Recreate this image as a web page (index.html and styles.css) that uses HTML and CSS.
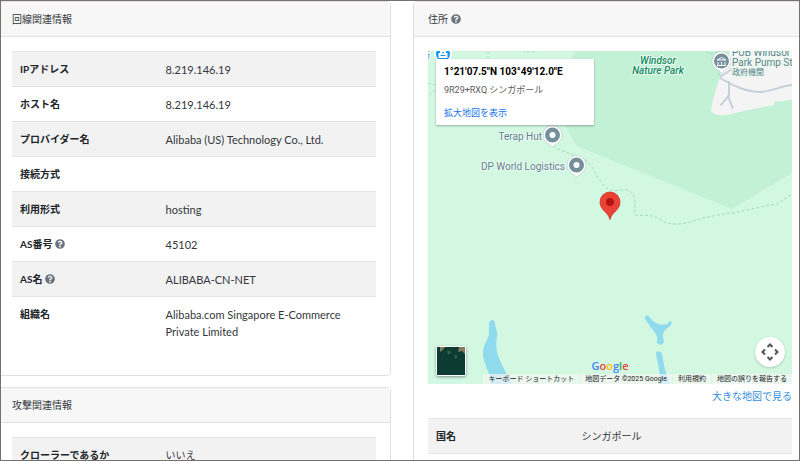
FILE: index.html
```html
<!DOCTYPE html>
<html lang="ja">
<head>
<meta charset="utf-8">
<title>IPアドレス情報</title>
<link rel="stylesheet" href="styles.css">
</head>
<body>
<svg class="defs" aria-hidden="true">
  <symbol id="help" viewBox="0 0 512 512"><path fill-rule="evenodd" d="M504 256a248 248 0 1 1-496 0 248 248 0 0 1 496 0zM262.700 90c-54.500 0-89.300 23-116.500 63.800-3.500 5.300-2.400 12.400 2.700 16.300l34.700 26.300c5.200 3.900 12.600 3 16.700-2.100 17.900-22.700 30.100-35.800 57.300-35.800 20.400 0 45.700 13.100 45.700 33 0 15-12.400 22.700-32.500 34C247.100 238.500 216 254.900 216 296v4c0 6.600 5.400 12 12 12h56c6.600 0 12-5.400 12-12v-1.300c0-28.500 83.200-29.600 83.200-106.700 0-58-60.200-102-116.500-102zM256 338a46 46 0 1 0 0 92 46 46 0 0 0 0-92z"/></symbol>
</svg>
<main class="page">
  <div class="column">
    <section class="card">
      <h2 class="card-header">回線関連情報</h2>
      <div class="card-body">
        <table class="info">
          <tr><th scope="row">IPアドレス</th><td>8.219.146.19</td></tr>
          <tr><th scope="row">ホスト名</th><td>8.219.146.19</td></tr>
          <tr><th scope="row">プロバイダー名</th><td>Alibaba (US) Technology Co., Ltd.</td></tr>
          <tr><th scope="row">接続方式</th><td></td></tr>
          <tr><th scope="row">利用形式</th><td>hosting</td></tr>
          <tr><th scope="row">AS番号 <svg class="help"><use href="#help"/></svg></th><td>45102</td></tr>
          <tr><th scope="row">AS名 <svg class="help"><use href="#help"/></svg></th><td>ALIBABA-CN-NET</td></tr>
          <tr><th scope="row">組織名</th><td>Alibaba.com Singapore E-Commerce Private Limited</td></tr>
        </table>
      </div>
    </section>
    <section class="card">
      <h2 class="card-header">攻撃関連情報</h2>
      <div class="card-body">
        <table class="info">
          <tr><th scope="row">クローラーであるか</th><td class="ja">いいえ</td></tr>
        </table>
      </div>
    </section>
  </div>
  <div class="column">
    <section class="card">
      <h2 class="card-header">住所 <svg class="help"><use href="#help"/></svg></h2>
      <div class="card-body">
        <div class="map">
          <svg class="map-canvas" viewBox="428 51 364 333" preserveAspectRatio="xMidYMid slice">
            <defs>
              <g id="pin"><path class="pin-edge" d="M0 11C-3 8-9.500 6-9.500-1a9.500 9.500 0 0 1 19 0c0 7-6.500 9-9.500 12z"/><circle class="pin-fill" cy="-1" r="7.500"/></g>
            </defs>
            <path class="land" d="M428 51h364v333H428z"/>
            <path class="park" d="M575 51l-5 11-17 38 12 26 12 20 155 63 60-36V51z"/>
            <path class="town" d="M730 51l-10 26c-4 12-8 25-9 33 0 4 8 6 16 5l21-5 26-5v-3l18-2V51z"/>
            <path class="road" d="M720 78c14 8 26 14 41 14 12-1 20-6 31-7M729 81v14l-7 9-2 1M728 96l5 13M720 77l12-8"/>
            <path class="trail" d="M553 146c7 6 15 5 23 11 15 0 17 15 25 25 9 13 17 7 24 8 13 1 9 16 10 25 13 1 20-1 27 6 13 5 19 3 28 1 20-6 31-8 43-9 19-4 31-7 44-9l15-10M706 51c2 4 8 3 12 1l-3 10 5 15"/>
            <path class="trail" d="M488 51v8M522 51q8 2 16 0M428 83l7 2M429 95l6-5"/>
            <path class="water" d="M489 323c1-4 6-4 6 0 0 5 3 9 2 14-2 10 0 18 5 28l10 19h-22c2-9-7-20-7-31 0-9 6-14 6-20z"/>
            <path class="water" d="M645 319c0-5 4-4 6 0 5 5 10 7 16 5l3-3c2 0 2 3 0 5-4 3-8 6-7 11l1 5-3 3-4-2c0-4 1-7-2-10zM656 354c0-4 5-3 6 0l3 16 5 14h-11c2-9-1-21-3-30z"/>
            <use href="#pin" x="552.500" y="136"/><circle class="pin-dot" cx="552.500" cy="135" r="3"/>
            <use href="#pin" x="576.500" y="166"/><circle class="pin-dot" cx="576.500" cy="165" r="3"/>
            <use href="#pin" x="721.500" y="62"/>
            <path class="pin-line" d="M717 60l4.500-2.500 4.500 2.500zM718 62v3M721.500 62v3M725 62v3M717 65.500h9"/>
            <circle class="shop" cx="443" cy="54" r="8"/>
            <path class="shop-line" d="M439.500 57v-3h7v3zM441 54v-3h4v3"/>
            <text class="place end" x="542" y="140">Terap Hut</text>
            <text class="place end" x="565" y="170">DP World Logistics</text>
            <text class="place" x="732" y="56">PUB Windsor</text>
            <text class="place" x="732" y="66">Park Pump Station</text>
            <text class="place-ja" x="732" y="75">政府機関</text>
            <text class="place-ja shop-name" x="422" y="58">所</text>
            <text class="park-name" x="658" y="64">Windsor</text>
            <text class="park-name" x="658" y="74">Nature Park</text>
            <path class="marker" d="M610 219.500c-2-8-10-9-10-17.500a10 10 0 0 1 20 0c0 8.500-8 9.500-10 17.500z"/>
            <circle class="marker-dot" cx="610" cy="202" r="4"/>
          </svg>
          <div class="place-card">
            <strong>1°21'07.5"N 103°49'12.0"E</strong>
            <span>9R29+RXQ シンガポール</span>
            <a href="#">拡大地図を表示</a>
          </div>
          <button class="satellite" type="button" aria-label="航空写真"><svg viewBox="0 0 28 28"><path fill="#0b3b32" d="M0 0h28v28H0z"/><path fill="#82795f" d="M3 0h5l-2 3-3 2zM22 0h6v7l-3-3-4 1z"/><path fill="#2c6349" d="M10 3l5 2-4 3zM17 7l4 3-3 2z"/></svg></button>
          <div class="logo" aria-label="Google"><span class="b">G</span><span class="r">o</span><span class="y">o</span><span class="b">g</span><span class="g">l</span><span class="r">e</span></div>
          <button class="pan" type="button" aria-label="カメラ コントロール"><svg viewBox="0 0 18 18"><path d="M6.500 4L9 1.500 11.500 4M6.500 14L9 16.500 11.500 14M4 6.500L1.500 9 4 11.500M14 6.500L16.500 9 14 11.500"/></svg></button>
          <div class="credits"><button type="button">キーボード ショートカット</button><span>地図データ ©2025 Google</span><a href="#">利用規約</a><a href="#">地図の誤りを報告する</a></div>
        </div>
        <p class="map-link"><a href="#">大きな地図で見る</a></p>
        <table class="info">
          <tr><th scope="row">国名</th><td class="ja">シンガポール</td></tr>
          <tr><th scope="row"></th><td></td></tr>
        </table>
      </div>
    </section>
  </div>
</main>
</body>
</html>
```
FILE: styles.css
```css
* { box-sizing: border-box; }
body {
  margin: 0;
  background: #fff;
  color: #32373c;
  font: 10px/17px Lato, "Noto Sans CJK JP", sans-serif;
}
.defs { display: block; width: 0; height: 0; }
.page {
  display: grid;
  grid-template-columns: minmax(0, 1fr) minmax(0, 1fr);
  gap: 22px;
  height: 100vh;
  overflow: hidden;
  border: 1px solid #77716c;
  padding: 0;
}
.column:first-child { margin-left: -4px; margin-right: -2px; }
.column:last-child { margin-left: 2px; margin-right: -8px; }
.card {
  margin-bottom: 11px;
  border: 1px solid #dfdfdf;
  border-radius: 4px;
  background: #fff;
}
.card-header {
  margin: 0;
  padding: 9px 14px 8px;
  border-bottom: 1px solid #dfdfdf;
  background: #f7f7f7;
  font-size: 10px;
  font-weight: 400;
}
.card-body { padding: 14px; }
.help {
  width: 10px;
  height: 10px;
  vertical-align: -1px;
  fill: #6c757d;
}
.info {
  width: 100%;
  margin-bottom: 13px;
  border-collapse: separate;
  border-spacing: 0;
  table-layout: fixed;
}
.info th, .info td {
  height: 35px;
  padding: 9px 8px 8px;
  border-top: 1px solid #e2e5e8;
  text-align: left;
  vertical-align: top;
}
.info th { width: 40%; color: #212529; font-weight: 700; }
.info td { font-size: 11px; }
.info td.ja { font-size: 10px; }
.info tr:nth-child(odd) { background: #f2f2f2; }
a { color: #3490dc; text-decoration: none; }
button { border: 0; padding: 0; font: inherit; color: inherit; }

.map {
  position: relative;
  height: 333px;
  overflow: hidden;
  font-family: Roboto, "Noto Sans CJK JP", sans-serif;
}
.map-canvas { display: block; width: 100%; height: 100%; }
.land { fill: #d3f8e2; }
.park { fill: #c3f1d5; }
.town { fill: #f5f4f5; }
.water { fill: #90daee; }
.road { fill: none; stroke: #c5cfdb; stroke-width: 2; }
.trail { fill: none; stroke: #a0dcc0; stroke-dasharray: 3 2; }
.pin-edge { fill: #fff; stroke: #a9b9b9; stroke-width: 0.5; }
.pin-fill { fill: #758f9b; }
.pin-dot { fill: #fff; }
.pin-line { fill: none; stroke: #fff; }
.shop { fill: #1595f5; stroke: #fff; stroke-width: 2; }
.shop-line { fill: none; stroke: #fff; stroke-width: 2; }
.place, .place-ja, .park-name {
  stroke: #e9fbf1;
  stroke-width: 2px;
  stroke-linejoin: round;
  paint-order: stroke;
  fill: #64808b;
  font-size: 10px;
}
.end { text-anchor: end; }
.place-ja { font-size: 8px; }
.shop-name { fill: #3b78e7; }
.park-name { fill: #178a62; font-style: italic; font-weight: 500; text-anchor: middle; }
.marker { fill: #ea4335; stroke: #c5281c; stroke-width: 0.7; }
.marker-dot { fill: #b31412; }
.place-card {
  position: absolute;
  top: 8px;
  left: 8px;
  display: flex;
  flex-direction: column;
  width: 158px;
  padding: 6px 8px 5px;
  background: #fff;
  box-shadow: 0 1px 2px rgba(0, 0, 0, 0.3);
  color: #5b5b5b;
  font-size: 9px;
  line-height: 14px;
  white-space: nowrap;
}
.place-card strong { color: #000; font-size: 10px; font-weight: 700; }
.place-card span { margin: 4px 0 9px; }
.place-card a { color: #1a73e8; }
.satellite {
  position: absolute;
  bottom: 8px;
  left: 8px;
  width: 30px;
  height: 30px;
  border: 1px solid #fff;
  border-radius: 2px;
  box-shadow: 0 1px 3px rgba(0, 0, 0, 0.4);
}
.satellite svg { display: block; width: 100%; height: 100%; }
.logo {
  position: absolute;
  bottom: 10px;
  left: 50%;
  transform: translateX(-50%);
  font: 600 11px/17px "Open Sans", sans-serif;
}
.b { color: #4285f4; }
.r { color: #ea4335; }
.y { color: #fbbc05; }
.g { color: #34a853; }
.pan {
  position: absolute;
  right: 7px;
  bottom: 17px;
  display: grid;
  place-items: center;
  width: 30px;
  height: 30px;
  border-radius: 50%;
  background: #fff;
  box-shadow: 0 1px 3px rgba(0, 0, 0, 0.2);
}
.pan svg { width: 18px; height: 18px; fill: none; stroke: #555; stroke-width: 2; }
.credits {
  position: absolute;
  right: 0;
  bottom: 0;
  display: flex;
  gap: 1px;
  color: #222;
  font-size: 7px;
  line-height: 10px;
  white-space: nowrap;
}
.credits > * { padding: 0 5px; background: rgba(245, 245, 245, 0.7); color: inherit; }
.map-link { margin: 4px 0 13px; text-align: right; }
```
